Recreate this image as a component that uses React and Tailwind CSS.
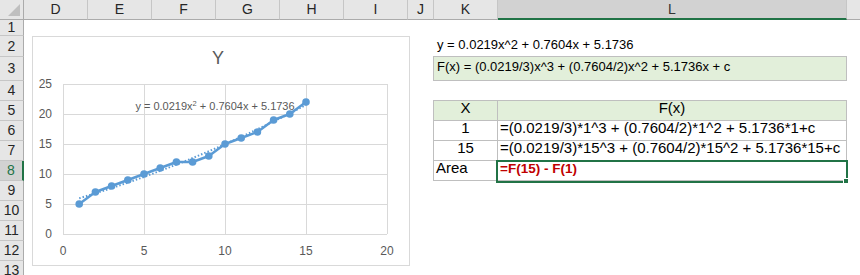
import React from 'react';

const COLS = [
  { id: 'D', w: 'w-[64px]' },
  { id: 'E', w: 'w-[64px]' },
  { id: 'F', w: 'w-[64px]' },
  { id: 'G', w: 'w-[64px]' },
  { id: 'H', w: 'w-[64px]' },
  { id: 'I', w: 'w-[64px]' },
  { id: 'J', w: 'w-[26px]' },
  { id: 'K', w: 'w-[64px]' },
  { id: 'L', w: 'w-[349px]', active: true },
];

const DATA = [5, 7, 8, 9, 10, 11, 12, 12, 13, 15, 16, 17, 19, 20, 22];

const px = (x) => 64 + x * 16.2;
const py = (y) => 235 - y * 6;

const ColHeader = () => (
  <div className="flex h-[20px] text-[14px]">
    <div className="flex-none w-[24px] h-full bg-[#E6E6E6] border-r border-b border-[#ABABAB] relative">
      <svg width="23" height="19" className="absolute left-0 top-0">
        <polygon points="20,4 20,16 8,16" fill="#BFBFBF" />
      </svg>
    </div>
    {COLS.map((c) => (
      <div
        key={c.id}
        className={`flex-none ${c.w} h-full flex items-center justify-center border-r border-r-[#C6C6C6] ${
          c.active
            ? 'bg-[#D2D2D2] border-b-2 border-b-[#217346] text-[#333333]'
            : 'bg-[#E6E6E6] border-b border-b-[#ABABAB] text-[#262626]'
        }`}
      >
        {c.id}
      </div>
    ))}
    <div className="flex-1 h-full bg-[#E6E6E6] border-b border-[#ABABAB]" />
  </div>
);

const RowHead = ({ n, active }) => (
  <div
    className={`flex-none w-[24px] h-full flex items-center justify-center border-b border-b-[#C6C6C6] text-[14px] ${
      active
        ? 'bg-[#D2D2D2] border-r-2 border-r-[#217346] text-[#217346]'
        : 'bg-[#E6E6E6] border-r border-r-[#ABABAB] text-[#262626]'
    }`}
  >
    {n}
  </div>
);

const Lead = () => (
  <>
    <div className="flex-none w-[384px]" />
    <div className="flex-none w-[25px]" />
  </>
);

const TableRow = ({ k, l, head, kLeft, children }) => (
  <>
    <Lead />
    <div
      className={`flex-none w-[65px] h-full border-l border-r border-b border-[#BFBFBF] flex items-end pb-[1px] text-[15px] ${
        head ? 'bg-[#E2EFDA]' : ''
      } ${kLeft ? 'justify-start pl-[2px]' : 'justify-center'}`}
    >
      {k}
    </div>
    <div
      className={`flex-none w-[349px] h-full border-r border-b border-[#BFBFBF] flex items-end pb-[1px] text-[15px] whitespace-nowrap relative ${
        head ? 'bg-[#E2EFDA] justify-center' : 'pl-[2px]'
      }`}
    >
      {l}
      {children}
    </div>
  </>
);

const Chart = () => {
  const trend = [];
  for (let x = 1; x <= 15.001; x += 0.25) {
    trend.push(`${px(x)},${py(0.0219 * x * x + 0.7604 * x + 5.1736)}`);
  }
  const series = DATA.map((y, i) => `${px(i + 1)},${py(y)}`).join(' ');
  const font = { fontFamily: '"Liberation Sans", Arial, sans-serif' };

  return (
    <div className="absolute left-[32px] top-[36px] w-[378px] h-[230px] bg-white border border-[#D9D9D9]">
      <svg width="378" height="230" viewBox="33 37 378 230" className="absolute -left-[1px] -top-[1px]">
        {[0, 5, 10, 15, 20, 25].map((v) => (
          <line key={`h${v}`} x1={64} x2={388} y1={py(v)} y2={py(v)} stroke="#D9D9D9" strokeWidth="1" shapeRendering="crispEdges" />
        ))}
        {[0, 5, 10, 15, 20].map((v) => (
          <line key={`v${v}`} x1={px(v)} x2={px(v)} y1={85} y2={235} stroke="#D9D9D9" strokeWidth="1" shapeRendering="crispEdges" />
        ))}
        {[0, 5, 10, 15, 20, 25].map((v) => (
          <text key={`yl${v}`} x={53} y={py(v) + 4} textAnchor="end" fontSize="12" fill="#595959" style={font}>
            {v}
          </text>
        ))}
        {[0, 5, 10, 15, 20].map((v) => (
          <text key={`xl${v}`} x={px(v)} y={256} textAnchor="middle" fontSize="12" fill="#595959" style={font}>
            {v}
          </text>
        ))}
        <text x={219} y={65} textAnchor="middle" fontSize="18" fill="#595959" style={font}>
          Y
        </text>
        <text x={216} y={111} textAnchor="middle" fontSize="11" fill="#595959" style={font}>
          y = 0.0219x<tspan dy="-4" fontSize="7.5">2</tspan>
          <tspan dy="4"> + 0.7604x + 5.1736</tspan>
        </text>
        <polyline points={trend.join(' ')} fill="none" stroke="#5B9BD5" strokeWidth="2" strokeDasharray="1.5 2" />
        <polyline points={series} fill="none" stroke="#5B9BD5" strokeWidth="2.5" strokeLinejoin="round" />
        {DATA.map((y, i) => (
          <circle key={i} cx={px(i + 1)} cy={py(y)} r="3.8" fill="#5B9BD5" />
        ))}
      </svg>
    </div>
  );
};

export default function App() {
  const blankRows = [9, 10, 11, 12, 13];

  return (
    <div className="relative w-[860px] h-[275px] overflow-hidden bg-white text-[13px] text-black font-['Liberation_Sans',Arial,sans-serif]">
      <ColHeader />

      <div className="flex h-[16px]">
        <RowHead n={1} />
      </div>

      <div className="flex h-[21px]">
        <RowHead n={2} />
        <Lead />
        <div className="flex-none w-[414px] h-full border-b border-[#BFBFBF] flex items-end pl-[4px] pb-[2px] whitespace-nowrap">
          y = 0.0219x^2 + 0.7604x + 5.1736
        </div>
      </div>

      <div className="flex h-[24px]">
        <RowHead n={3} />
        <Lead />
        <div className="flex-none w-[414px] h-full bg-[#E2EFDA] border-l border-r border-b border-[#BFBFBF] flex items-end pl-[3px] pb-[4px] whitespace-nowrap">
          F(x) = (0.0219/3)x^3 + (0.7604/2)x^2 + 5.1736x + c
        </div>
      </div>

      <div className="flex h-[20px]">
        <RowHead n={4} />
        <Lead />
        <div className="flex-none w-[414px] h-full border-b border-[#BFBFBF]" />
      </div>

      <div className="flex h-[20px]">
        <RowHead n={5} />
        <TableRow head k="X" l="F(x)" />
      </div>

      <div className="flex h-[20px]">
        <RowHead n={6} />
        <TableRow k="1" l="=(0.0219/3)*1^3 + (0.7604/2)*1^2 + 5.1736*1+c" />
      </div>

      <div className="flex h-[20px]">
        <RowHead n={7} />
        <TableRow k="15" l="=(0.0219/3)*15^3 + (0.7604/2)*15^2 + 5.1736*15+c" />
      </div>

      <div className="flex h-[20px]">
        <RowHead n={8} active />
        <TableRow kLeft k="Area" l={<span className="relative font-bold text-[13.5px] text-[#C00000]">=F(15) - F(1)</span>}>
          <div className="absolute -left-[2px] -top-[1px] w-[352px] h-[23px] border-2 border-[#217346]" />
          <div className="absolute -right-[3px] -bottom-[4px] w-[6px] h-[6px] bg-[#217346] border border-white" />
        </TableRow>
      </div>

      {blankRows.map((n) => (
        <div key={n} className="flex h-[20px]">
          <RowHead n={n} />
        </div>
      ))}

      <Chart />
    </div>
  );
}
